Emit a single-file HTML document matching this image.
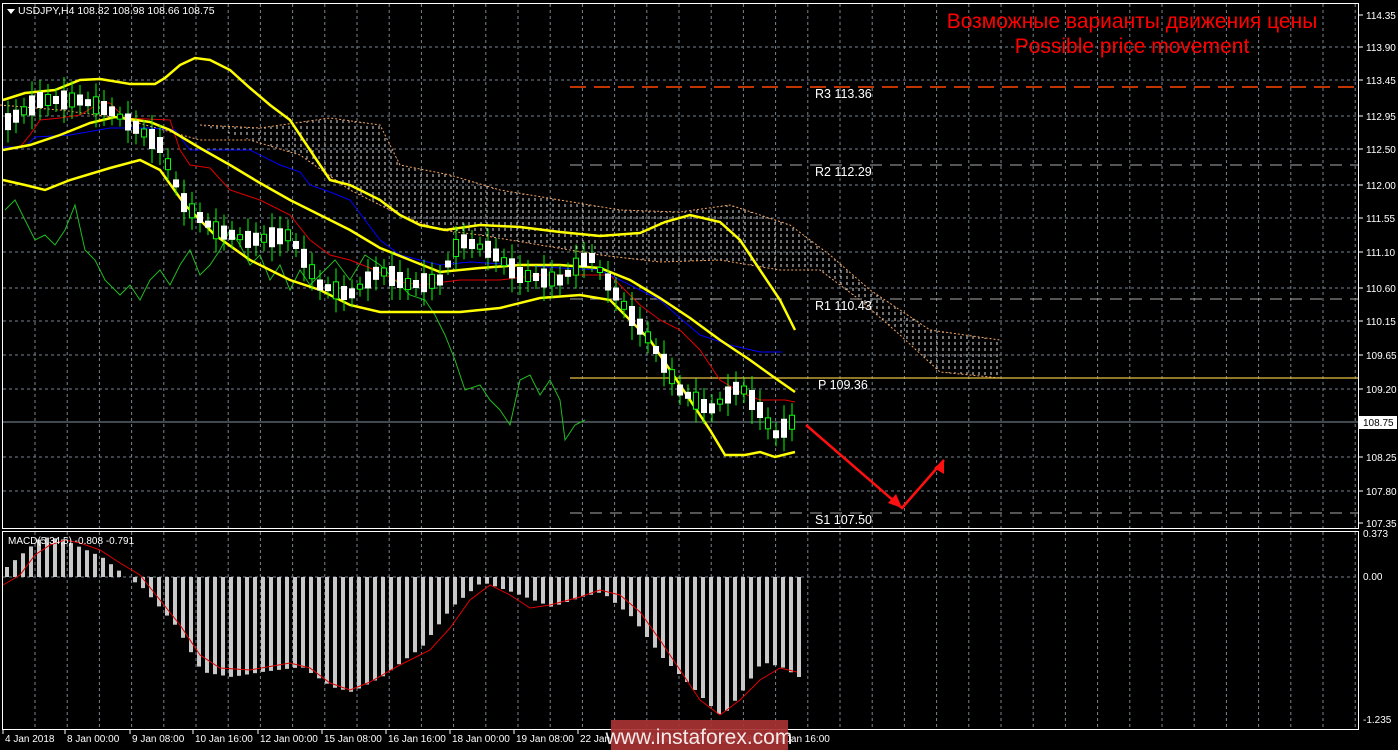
<!DOCTYPE html>
<html><head><meta charset="utf-8"><style>
html,body{margin:0;padding:0;background:#000;width:1398px;height:750px;overflow:hidden}
svg{display:block}
text{font-family:"Liberation Sans",sans-serif}
</style></head><body>
<svg id="s" width="1398" height="750" xmlns="http://www.w3.org/2000/svg">
<defs>
<pattern id="hatch" width="6" height="6" patternUnits="userSpaceOnUse">
<line x1="1" y1="0" x2="1" y2="3" stroke="#ddd" stroke-width="1"/>
</pattern>
</defs>
<rect width="1398" height="750" fill="#000"/>
<g id="grid" stroke="#7a8590" stroke-dasharray="3,3" stroke-width="1"></g>
<path d="M200,125 L260,128 L330,118 L380,125 L400,165 L450,175 L500,190 L560,200 L620,210 L680,212 L730,205 L790,225 L830,255 L870,290 L930,330 L1000,340 L1000,378 L940,372 L900,335 L860,300 L820,270 L780,270 L720,260 L660,262 L600,255 L540,245 L480,235 L440,230 L400,215 L350,190 L300,155 L250,140 Z" fill="url(#hatch)"/>
<polyline fill="none" stroke="#f4a460" stroke-dasharray="2,2" points="200,125 260,128 330,118 380,125 400,165 450,175 500,190 560,200 620,210 680,212 730,205 790,225 830,255 870,290 930,330 1000,340"/>
<polyline fill="none" stroke="#f4a460" stroke-dasharray="2,2" points="0,105 60,110 120,118 200,140 250,140 300,155 350,190 400,215 440,230 480,235 540,245 600,255 660,262 720,260 780,270 820,270 860,300 900,335 940,372 1000,378"/>
<line x1="570" y1="87" x2="1358" y2="87" stroke="#ff4500" stroke-width="1.5" stroke-dasharray="16,8"/>
<line x1="570" y1="165" x2="1358" y2="165" stroke="#aaa" stroke-dasharray="12,8"/>
<line x1="570" y1="299" x2="1358" y2="299" stroke="#aaa" stroke-dasharray="12,8"/>
<line x1="570" y1="378" x2="1358" y2="378" stroke="#e8c040" stroke-width="1.2"/>
<line x1="570" y1="513" x2="1358" y2="513" stroke="#aaa" stroke-dasharray="12,8"/>
<line x1="3" y1="422" x2="1358" y2="422" stroke="#8090a0" stroke-width="1"/>
<g fill="#fff" font-size="12.5" font-family="Liberation Mono, monospace">
<text x="815" y="98" fill="#fff" font-family="Liberation Mono, monospace">R3 113.36</text>
<text x="815" y="176" font-family="Liberation Mono, monospace">R2 112.29</text>
<text x="815" y="310" font-family="Liberation Mono, monospace">R1 110.43</text>
<text x="818" y="389" font-family="Liberation Mono, monospace">P 109.36</text>
<text x="815" y="524" font-family="Liberation Mono, monospace">S1 107.50</text>
</g>
<polyline fill="none" stroke="#22bb22" points="5,210 15,200 25,220 35,240 45,235 55,245 65,230 75,205 85,250 95,260 105,280 120,295 130,285 140,300 150,280 160,270 170,285 180,265 190,250 200,275 210,265 220,250 230,230 240,245 250,265 260,255 270,280 280,265 290,290 300,270 310,285 320,275 335,260 350,280 365,255 380,265 395,280 410,295 425,300 435,315 445,335 455,360 465,390 480,385 490,400 500,410 510,425 520,380 530,375 540,395 550,380 560,400 565,440 575,425 585,420"/>
<polyline fill="none" stroke="#e00000" points="3,147 20,147 30,135 40,120 60,118 80,115 100,103 110,103 125,118 170,120 180,150 190,165 210,168 230,190 260,200 290,215 310,240 330,255 350,260 370,268 400,282 420,285 460,280 500,280 540,275 580,275 610,275 625,290 640,305 660,320 680,330 700,350 720,380 740,392 760,400 785,400 795,402"/>
<polyline fill="none" stroke="#0000ff" points="3,147 25,147 35,137 70,135 110,128 150,128 175,130 190,150 250,150 280,165 300,172 310,185 330,192 350,200 380,240 400,255 440,265 470,262 520,265 560,268 600,270 620,280 640,290 660,300 680,318 700,335 730,345 760,352 782,352"/>
<g fill="none" stroke="#ffff00" stroke-width="2.5">
<polyline points="3,100 25,93 55,90 80,80 100,79 130,84 155,84 165,78 180,65 195,58 210,60 230,70 250,88 270,105 290,120 310,150 330,180 350,185 380,200 400,215 420,225 445,230 480,225 520,227 560,232 600,236 640,233 665,222 690,215 720,222 740,240 760,270 780,300 795,330"/>
<polyline points="3,150 30,145 60,135 90,123 115,117 150,122 170,130 200,148 230,165 260,183 290,200 320,215 350,230 380,248 410,260 440,272 480,268 520,265 560,265 600,268 630,280 660,298 690,318 720,340 750,360 775,378 795,392"/>
<polyline points="3,180 25,185 45,190 70,180 110,168 140,160 160,170 185,205 215,235 250,260 290,280 320,290 350,305 380,312 420,312 460,312 500,308 540,298 580,295 610,300 630,320 650,340 670,370 690,400 710,430 725,455 745,455 760,452 775,457 795,452"/>
</g>
<g id="candles"></g>
<text x="1132" y="28" fill="#ff0000" font-size="21" text-anchor="middle">Возможные варианты движения цены</text>
<text x="1132" y="53" fill="#ff0000" font-size="21" text-anchor="middle">Possible price movement</text>
<polyline points="806,425 902,508 944,460" fill="none" stroke="#ff1010" stroke-width="2.5"/>
<polygon points="902,508 888,503 896,494" fill="#ff1010"/>
<polygon points="944,460 944,474 934,468" fill="#ff1010"/>
<polygon points="7,9 15,9 11,14" fill="#fff"/>
<text x="18" y="14" fill="#fff" font-size="10.5">USDJPY,H4  108.82 108.98 108.66 108.75</text>
<line x1="3" y1="577" x2="1358" y2="577" stroke="#7a8590" stroke-dasharray="3,3"/>
<g id="hist" fill="#c8c8c8"></g>
<polyline fill="none" stroke="#e00000" points="3,585 20,575 35,555 50,545 65,540 80,543 100,550 120,563 140,575 160,600 180,625 200,655 220,668 250,670 290,663 310,668 330,683 350,690 370,682 400,665 430,650 450,628 470,600 490,585 510,595 530,608 550,605 580,597 600,590 620,595 640,612 660,640 680,670 700,700 720,715 740,700 760,680 780,668 797,672"/>
<text x="8" y="544" fill="#fff" font-size="10">MACD(5,34,5) -0.808 -0.791</text>
<rect x="2.5" y="3.5" width="1356" height="525" fill="none" stroke="#fff"/>
<rect x="2.5" y="531.5" width="1356" height="198" fill="none" stroke="#fff"/>
<g id="axis" fill="#fff" font-size="10"></g>
<rect x="1359" y="416" width="38" height="13" fill="#fff"/>
<text x="1363" y="426" fill="#000" font-size="10">108.75</text>
<rect x="611" y="720" width="177" height="30" fill="#a83232" opacity="0.92"/>
<text x="699" y="744" fill="#fff" font-size="21" text-anchor="middle" opacity="0.9">www.instaforex.com</text>
</svg>
<script>
var NS="http://www.w3.org/2000/svg";
function el(t,a,p){var e=document.createElementNS(NS,t);for(var k in a)e.setAttribute(k,a[k]);document.getElementById(p).appendChild(e);return e;}
for(var x=35;x<1358;x+=32.2){el('line',{x1:x,y1:4,x2:x,y2:528},'grid');el('line',{x1:x,y1:532,x2:x,y2:729},'grid');}
var ys=[15,47,80,116,149,185,218,252,288,321,355,389,422,457,491,523];
var lab=["114.35","113.90","113.45","112.95","112.50","112.00","111.55","111.10","110.60","110.15","109.65","109.20","108.75","108.25","107.80","107.35"];
for(var i=0;i<ys.length;i++){if(i>0&&i<15)el('line',{x1:3,y1:ys[i],x2:1358,y2:ys[i]},'grid');el('line',{x1:1358,y1:ys[i],x2:1363,y2:ys[i],stroke:'#fff'},'axis');var t=el('text',{x:1366,y:ys[i]+4},'axis');t.textContent=lab[i];}
[["0.373",537],["0.00",580],["-1.235",723]].forEach(function(a){var t=el('text',{x:1363,y:a[1]},'axis');t.textContent=a[0];});
var tl=[["4 Jan 2018",3],["8 Jan 00:00",65],["9 Jan 08:00",130],["10 Jan 16:00",193],["12 Jan 00:00",258],["15 Jan 08:00",322],["16 Jan 16:00",386],["18 Jan 00:00",450],["19 Jan 08:00",514],["22 Jan 16:00",578],["24 Jan 00:00",642],["25 Jan 08:00",706],["26 Jan 16:00",770]];
tl.forEach(function(a){el('line',{x1:a[1],y1:730,x2:a[1],y2:734,stroke:'#fff'},'axis');var t=el('text',{x:a[1]+2,y:742},'axis');t.textContent=a[0];});
var mid=[[3,125],[40,100],[80,100],[110,110],[140,130],[160,145],[185,205],[215,230],[250,240],[290,235],[320,285],[350,295],[380,270],[410,285],[440,280],[460,240],[490,250],[520,275],[560,280],[590,255],[620,300],[650,340],[680,390],[710,410],[740,385],[760,410],[775,435],[795,420]];
function my(x){for(var i=0;i<mid.length-1;i++){if(x>=mid[i][0]&&x<=mid[i+1][0]){var f=(x-mid[i][0])/(mid[i+1][0]-mid[i][0]);return mid[i][1]+f*(mid[i+1][1]-mid[i][1]);}}return 420;}
for(var x=8;x<796;x+=8){var y=my(x),h=5+((x*7)%15),up=((x*13|0)%3)==0;el('line',{x1:x,y1:y-h-5,x2:x,y2:y+h+5,stroke:'#00ff00'},'candles');el('rect',{x:x-2.5,y:y-h/2,width:5,height:h,fill:up?'#000':'#fff',stroke:up?'#00ff00':'#fff'},'candles');}
var hm=[[5,-10],[40,-40],[60,-38],[100,-20],[125,0],[140,10],[175,50],[200,95],[230,100],[260,95],[300,90],[330,110],[350,115],[380,100],[420,70],[450,30],[480,5],[510,15],[550,30],[580,20],[600,15],[630,40],[660,80],[690,110],[720,140],[740,115],[760,85],[780,90],[797,100]];
function hv(x){for(var i=0;i<hm.length-1;i++){if(x>=hm[i][0]&&x<=hm[i+1][0]){var f=(x-hm[i][0])/(hm[i+1][0]-hm[i][0]);return hm[i][1]+f*(hm[i+1][1]-hm[i][1]);}}return 0;}
for(var x=5;x<800;x+=8){var v=hv(x);if(v<0)el('rect',{x:x,y:577+v,width:4,height:-v},'hist');else el('rect',{x:x,y:577,width:4,height:v},'hist');}
</script>
</body></html>
